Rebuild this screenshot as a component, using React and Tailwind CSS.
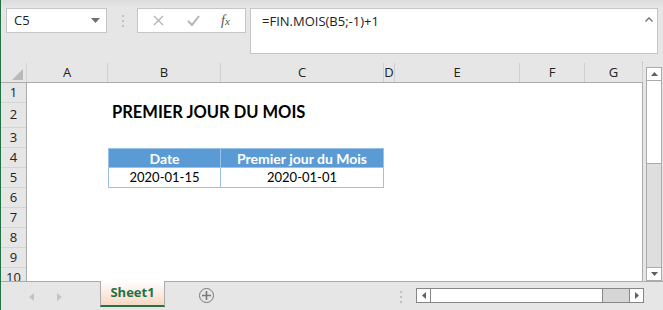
import React from 'react'

const cols = [
  { k: 'A', w: 81 },
  { k: 'B', w: 113 },
  { k: 'C', w: 163 },
  { k: 'D', w: 11 },
  { k: 'E', w: 125 },
  { k: 'F', w: 65 },
  { k: 'G', w: 58 },
]

const rows = [
  { n: 1, h: 20 },
  { n: 2, h: 25 },
  { n: 3, h: 20 },
  { n: 4, h: 20 },
  { n: 5, h: 20 },
  { n: 6, h: 20 },
  { n: 7, h: 20 },
  { n: 8, h: 20 },
  { n: 9, h: 20 },
  { n: 10, h: 20 },
]

const cellFont = { fontFamily: 'Lato, "Liberation Sans", sans-serif' }
const uiFont = { fontFamily: '"Open Sans", "Noto Sans", sans-serif' }

function RowContent({ n }) {
  if (n === 2) {
    return (
      <div className="flex h-full">
        <div className="w-[81px]" />
        <div className="flex w-[300px] items-end pb-[3px] pl-[4px] text-[16.5px] font-bold text-black" style={cellFont}>
          PREMIER JOUR DU MOIS
        </div>
      </div>
    )
  }
  if (n === 4) {
    return (
      <div className="flex h-full">
        <div className="w-[81px]" />
        <div className="flex w-[113px] items-center justify-center border border-[#9bc2e6] bg-[#5b9bd5] text-[14px] font-bold text-white" style={cellFont}>
          Date
        </div>
        <div className="flex w-[163px] items-center justify-center border border-l-0 border-[#9bc2e6] bg-[#5b9bd5] text-[14px] font-bold text-white" style={cellFont}>
          Premier jour du Mois
        </div>
      </div>
    )
  }
  if (n === 5) {
    return (
      <div className="flex h-full">
        <div className="w-[81px]" />
        <div className="flex w-[113px] items-center justify-center border border-t-0 border-[#9bc2e6] text-[13px] text-black" style={cellFont}>
          2020-01-15
        </div>
        <div className="flex w-[163px] items-center justify-center border border-l-0 border-t-0 border-[#9bc2e6] text-[13px] text-black" style={cellFont}>
          2020-01-01
        </div>
      </div>
    )
  }
  return null
}

function VDots() {
  return (
    <div className="flex flex-col gap-[3px]">
      <div className="h-[2px] w-[2px] bg-[#c0c0c0]" />
      <div className="h-[2px] w-[2px] bg-[#c0c0c0]" />
      <div className="h-[2px] w-[2px] bg-[#c0c0c0]" />
    </div>
  )
}

export default function App() {
  return (
    <div className="flex h-[310px] w-[663px] overflow-hidden bg-[#e6e6e6]" style={uiFont}>
      <div className="w-px shrink-0 bg-[#217346]" />
      <div className="flex min-w-0 flex-1 flex-col">
        {/* formula bar */}
        <div className="flex h-[62px] shrink-0 items-start bg-gradient-to-b from-[#dcdcdc] to-[#e6e6e6] to-[12%] pt-[8px]">
          <div className="ml-[5px] flex h-[25px] w-[101px] items-center justify-between border border-[#c6c6c6] bg-white pl-[7px] pr-[6px] text-[13px] text-[#222]">
            <span>C5</span>
            <svg width="9" height="5" viewBox="0 0 9 5">
              <path d="M0 0h9L4.5 5z" fill="#6f6f6f" />
            </svg>
          </div>
          <div className="ml-[15px] mt-[7px]">
            <VDots />
          </div>
          <div className="ml-[13px] flex h-[25px] w-[109px] items-center border border-[#c6c6c6] bg-white">
            <svg className="ml-[15px]" width="11" height="11" viewBox="0 0 11 11">
              <path d="M1 1l9 9M10 1l-9 9" stroke="#b4b4b4" strokeWidth="1.4" />
            </svg>
            <svg className="ml-[23px]" width="13" height="11" viewBox="0 0 13 11">
              <path d="M1 6l4 4 7-9" stroke="#b4b4b4" strokeWidth="2" fill="none" />
            </svg>
            <span className="ml-[21px] text-[14px] italic text-[#555]" style={{ fontFamily: '"Liberation Serif", serif' }}>
              f<span className="text-[11px]">x</span>
            </span>
          </div>
          <div className="ml-[4px] flex h-[46px] w-[408px] items-start justify-between border border-[#c6c6c6] bg-white pl-[11px] pr-[4px] pt-[3px] text-[13px] text-[#222]">
            <span>=FIN.MOIS(B5;-1)+1</span>
            <svg className="mt-[5px]" width="8" height="5" viewBox="0 0 8 5">
              <path d="M0.5 4.5L4 1l3.5 3.5" stroke="#6f6f6f" strokeWidth="1.3" fill="none" />
            </svg>
          </div>
        </div>

        {/* sheet + vertical scroll */}
        <div className="flex h-[219px] shrink-0">
          <div className="flex w-[642px] flex-col border-r border-[#ababab]">
            {/* column headers */}
            <div className="flex h-[21px] shrink-0 border-b border-[#ababab] pt-px">
              <div className="relative w-[26px] shrink-0 border-r border-[#d4d4d4]">
                <svg className="absolute bottom-[2px] right-[3px]" width="11" height="11" viewBox="0 0 11 11">
                  <path d="M11 0v11H0z" fill="#b9b9b9" />
                </svg>
              </div>
              {cols.map((c) => (
                <div
                  key={c.k}
                  className="flex shrink-0 items-center justify-center border-r border-[#d0d0d0] text-[13px] text-[#222]"
                  style={{ width: c.w }}
                >
                  {c.k}
                </div>
              ))}
            </div>
            {/* rows */}
            <div className="flex flex-1 overflow-hidden">
              <div className="flex w-[26px] shrink-0 flex-col border-r border-[#ababab]">
                {rows.map((r) => (
                  <div
                    key={r.n}
                    className="flex shrink-0 items-center justify-center border-b border-[#d4d4d4] text-[13px] text-[#222]"
                    style={{ height: r.h }}
                  >
                    {r.n}
                  </div>
                ))}
              </div>
              <div className="flex flex-1 flex-col bg-white">
                {rows.map((r) => (
                  <div key={r.n} className="shrink-0" style={{ height: r.h }}>
                    <RowContent n={r.n} />
                  </div>
                ))}
              </div>
            </div>
          </div>
          <div className="ml-[3px] mt-[5px] flex w-[16px] flex-col border border-[#ababab] bg-[#dedede]">
            <div className="flex h-[13px] items-center justify-center border-b border-[#ababab] bg-white">
              <svg width="7" height="4" viewBox="0 0 7 4">
                <path d="M0 4h7L3.5 0z" fill="#606060" />
              </svg>
            </div>
            <div className="h-[83px] border-b border-[#ababab] bg-white" />
            <div className="flex-1" />
            <div className="flex h-[13px] items-center justify-center border-t border-[#ababab] bg-white">
              <svg width="7" height="4" viewBox="0 0 7 4">
                <path d="M0 0h7L3.5 4z" fill="#606060" />
              </svg>
            </div>
          </div>
        </div>

        {/* tabs bar */}
        <div className="flex h-[29px] shrink-0 items-start border-t border-[#ababab]">
          <div className="ml-[28px] mt-[11px] flex items-center gap-[23px]">
            <svg width="5" height="8" viewBox="0 0 5 8">
              <path d="M5 0v8L0 4z" fill="#c4c4c4" />
            </svg>
            <svg width="5" height="8" viewBox="0 0 5 8">
              <path d="M0 0v8l5-4z" fill="#c4c4c4" />
            </svg>
          </div>
          <div className="-mt-px ml-[38px] flex h-[26px] w-[65px] items-center justify-center border-x border-b-2 border-x-[#ababab] border-b-[#217346] bg-gradient-to-b from-white to-[#f7d7c4] text-[13px] font-bold text-[#217346]">
            Sheet1
          </div>
          <div className="ml-[34px] mt-[6px] flex h-[15px] w-[15px] items-center justify-center rounded-full border-[1.5px] border-[#7a7a7a]">
            <svg width="9" height="9" viewBox="0 0 9 9">
              <path d="M4.5 0v9M0 4.5h9" stroke="#7a7a7a" strokeWidth="1.6" />
            </svg>
          </div>
          <div className="ml-auto mt-[9px]">
            <VDots />
          </div>
          <div className="ml-[14px] mr-[19px] mt-[6px] flex h-[15px] w-[228px] border border-[#868686] bg-[#d6d6d6]">
            <div className="flex w-[14px] items-center justify-center border-r border-[#868686] bg-white">
              <svg width="4" height="7" viewBox="0 0 4 7">
                <path d="M4 0v7L0 3.5z" fill="#606060" />
              </svg>
            </div>
            <div className="w-[172px] border-r border-[#868686] bg-white" />
            <div className="flex-1" />
            <div className="flex w-[14px] items-center justify-center border-l border-[#868686] bg-white">
              <svg width="4" height="7" viewBox="0 0 4 7">
                <path d="M0 0v7l4-3.5z" fill="#606060" />
              </svg>
            </div>
          </div>
        </div>
      </div>
    </div>
  )
}
